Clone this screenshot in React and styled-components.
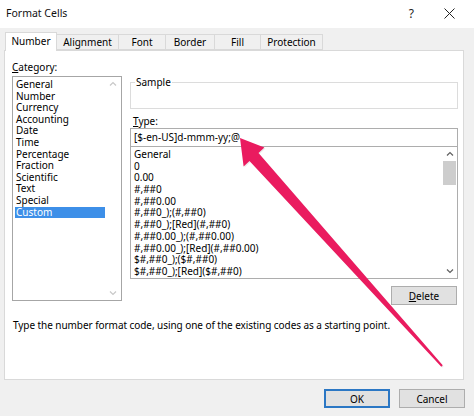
import styled, { createGlobalStyle } from "styled-components";

const GlobalStyle = createGlobalStyle`
    html, body {
        margin: 0;
        padding: 0;
        background: #f0f0f0;
    }
    * {
        box-sizing: border-box;
    }
`;

const categories = [
    "General", "Number", "Currency", "Accounting", "Date", "Time",
    "Percentage", "Fraction", "Scientific", "Text", "Special", "Custom",
];

const formats = [
    "General", "0", "0.00", "#,##0", "#,##0.00", "#,##0_);(#,##0)",
    "#,##0_);[Red](#,##0)", "#,##0.00_);(#,##0.00)", "#,##0.00_);[Red](#,##0.00)",
    "$#,##0_);($#,##0)", "$#,##0_);[Red]($#,##0)",
];

const tabs = ["Number", "Alignment", "Font", "Border", "Fill", "Protection"];
const tabWidths = [52, 63, 48, 50, 47, 63];

const Chevron = ({ up, color }) => (
    <svg width="8" height="5" viewBox="0 0 8 5">
        <path d={up ? "M1 4.5 L4 1.5 L7 4.5" : "M1 0.5 L4 3.5 L7 0.5"} fill="none" stroke={color} strokeWidth="1.2" />
    </svg>
);

const App = () => {
    return (
        <Dialog>
            <GlobalStyle />
            <TitleBar>
                <Title>Format Cells</Title>
                <TitleButtons>
                    <Help>?</Help>
                    <svg width="11" height="11" viewBox="0 0 11 11">
                        <path d="M0.5 0.5 L10.5 10.5 M10.5 0.5 L0.5 10.5" stroke="#222" strokeWidth="1" />
                    </svg>
                </TitleButtons>
            </TitleBar>
            <Body>
                <TabStrip>
                    {tabs.map((t, i) => (
                        <Tab key={t} $active={i === 0} $w={tabWidths[i]}>{t}</Tab>
                    ))}
                </TabStrip>
                <Panel>
                    <Columns>
                        <LeftColumn>
                            <Label><u>C</u>ategory:</Label>
                            <CategoryList>
                                <Items>
                                    {categories.map((c) => (
                                        <CategoryItem key={c} $selected={c === "Custom"}>{c}</CategoryItem>
                                    ))}
                                </Items>
                                <ScrollBar>
                                    <Chevron up color="#c8c8c8" />
                                    <Track />
                                    <Chevron color="#c8c8c8" />
                                </ScrollBar>
                            </CategoryList>
                        </LeftColumn>
                        <RightColumn>
                            <SampleGroup>
                                <legend>Sample</legend>
                            </SampleGroup>
                            <TypeLabel><u>T</u>ype:</TypeLabel>
                            <TypeInput>[$-en-US]d-mmm-yy;@</TypeInput>
                            <FormatList>
                                <Items>
                                    {formats.map((f, i) => (
                                        <FormatItem key={i}>{f}</FormatItem>
                                    ))}
                                </Items>
                                <ScrollBar $narrow>
                                    <Chevron up color="#606060" />
                                    <Track>
                                        <Thumb />
                                    </Track>
                                    <Chevron color="#606060" />
                                </ScrollBar>
                            </FormatList>
                            <DeleteButton><u>D</u>elete</DeleteButton>
                        </RightColumn>
                    </Columns>
                    <Hint>Type the number format code, using one of the existing codes as a starting point.</Hint>
                </Panel>
                <Footer>
                    <Button $default>OK</Button>
                    <Button>Cancel</Button>
                </Footer>
            </Body>
            <Overlay width="474" height="416" viewBox="0 0 474 416">
                <polygon
                    points="241,139 265.4,148.6 259.5,154 443.7,366.3 442.3,367.7 250.5,162 244.6,167.4"
                    fill="#000"
                    opacity="0.08"
                />
                <polygon
                    points="240,138 264.4,147.6 258.5,153 442.7,365.3 441.3,366.7 249.5,161 243.6,166.4"
                    fill="#ea1b5f"
                />
            </Overlay>
        </Dialog>
    );
};

const Dialog = styled.div`
    position: relative;
    width: 474px;
    height: 416px;
    display: flex;
    flex-direction: column;
    background: #f0f0f0;
    font-family: "Noto Sans", "Open Sans", sans-serif;
    font-size: 10px;
    color: #000;
    overflow: hidden;
`;

const TitleBar = styled.div`
    height: 28px;
    background: #fff;
    display: flex;
    align-items: center;
    justify-content: space-between;
    padding: 0 19px 2px 6px;
`;

const Title = styled.div`
    font-size: 10.5px;
    color: #111;
`;

const TitleButtons = styled.div`
    display: flex;
    align-items: center;
    gap: 30px;
`;

const Help = styled.span`
    font-size: 12px;
    color: #222;
`;

const Body = styled.div`
    flex: 1;
    display: flex;
    flex-direction: column;
    padding: 4px 10px 0 4px;
`;

const TabStrip = styled.div`
    height: 18px;
    display: flex;
    align-items: flex-end;
    padding-left: 1px;
    position: relative;
    z-index: 1;
`;

const Tab = styled.div`
    width: ${(p) => p.$w}px;
    height: ${(p) => (p.$active ? 19 : 16)}px;
    margin-bottom: ${(p) => (p.$active ? -1 : 0)}px;
    display: flex;
    align-items: center;
    justify-content: center;
    background: ${(p) => (p.$active ? "#fff" : "#f0f0f0")};
    border: 1px solid #d9d9d9;
    border-bottom: ${(p) => (p.$active ? "none" : "1px solid #d9d9d9")};
    margin-right: -1px;
    font-size: 10px;
    padding-bottom: ${(p) => (p.$active ? 2 : 0)}px;
`;

const Panel = styled.div`
    height: 330px;
    background: #fff;
    border: 1px solid #d9d9d9;
    padding: 8px 5px 0 7px;
    display: flex;
    flex-direction: column;
`;

const Columns = styled.div`
    display: flex;
    gap: 8px;
`;

const LeftColumn = styled.div`
    width: 110px;
    display: flex;
    flex-direction: column;
`;

const Label = styled.div`
    height: 17px;
    line-height: 16px;
`;

const CategoryList = styled.div`
    height: 225px;
    border: 1px solid #a6a6a6;
    display: flex;
    padding: 2px 0 0 3px;
`;

const Items = styled.div`
    flex: 1;
    display: flex;
    flex-direction: column;
`;

const CategoryItem = styled.div`
    height: 11.6px;
    line-height: 11.6px;
    padding-left: 1px;
    margin-left: -1px;
    background: ${(p) => (p.$selected ? "#3d8fe8" : "transparent")};
    color: ${(p) => (p.$selected ? "#fff" : "#000")};
`;

const ScrollBar = styled.div`
    width: ${(p) => (p.$narrow ? 13 : 16)}px;
    display: flex;
    flex-direction: column;
    align-items: center;
    padding: 4px 0 4px;
    margin-top: -2px;
`;

const Track = styled.div`
    flex: 1;
    width: 100%;
    padding-top: 5px;
`;

const Thumb = styled.div`
    height: 24px;
    background: #cdcdcd;
`;

const RightColumn = styled.div`
    flex: 1;
    display: flex;
    flex-direction: column;
    padding-top: 17px;
`;

const SampleGroup = styled.fieldset`
    margin: 0;
    height: 33px;
    border: 1px solid #dcdcdc;
    padding: 0 4px;

    legend {
        padding: 0 1px;
        line-height: 12px;
        font-size: 10px;
    }
`;

const TypeLabel = styled.div`
    margin-top: 6px;
    height: 13px;
    line-height: 13px;
    padding-left: 3px;
`;

const TypeInput = styled.div`
    height: 19px;
    border: 1px solid #adadad;
    padding-left: 3px;
    line-height: 16px;
`;

const FormatList = styled.div`
    height: 132px;
    border: 1px solid #adadad;
    border-top: none;
    display: flex;
    padding: 2px 1px 0 3px;
`;

const FormatItem = styled.div`
    height: 11.7px;
    line-height: 11.7px;
`;

const DeleteButton = styled.div`
    align-self: flex-end;
    margin: 7px 1px 0 0;
    width: 66px;
    height: 19px;
    background: #e1e1e1;
    border: 1px solid #adadad;
    display: flex;
    align-items: center;
    justify-content: center;
`;

const Hint = styled.div`
    margin-top: 13px;
    padding-left: 1px;
    letter-spacing: -0.06px;
`;

const Footer = styled.div`
    display: flex;
    justify-content: flex-end;
    gap: 9px;
    padding: 9px 0 0;
    margin-right: -1px;
`;

const Button = styled.div`
    width: 66px;
    height: 19px;
    background: #e1e1e1;
    border: ${(p) => (p.$default ? "2px solid #2b77c4" : "1px solid #adadad")};
    display: flex;
    align-items: center;
    justify-content: center;
`;

const Overlay = styled.svg`
    position: absolute;
    left: 0;
    top: 0;
    pointer-events: none;
`;

export default App;
